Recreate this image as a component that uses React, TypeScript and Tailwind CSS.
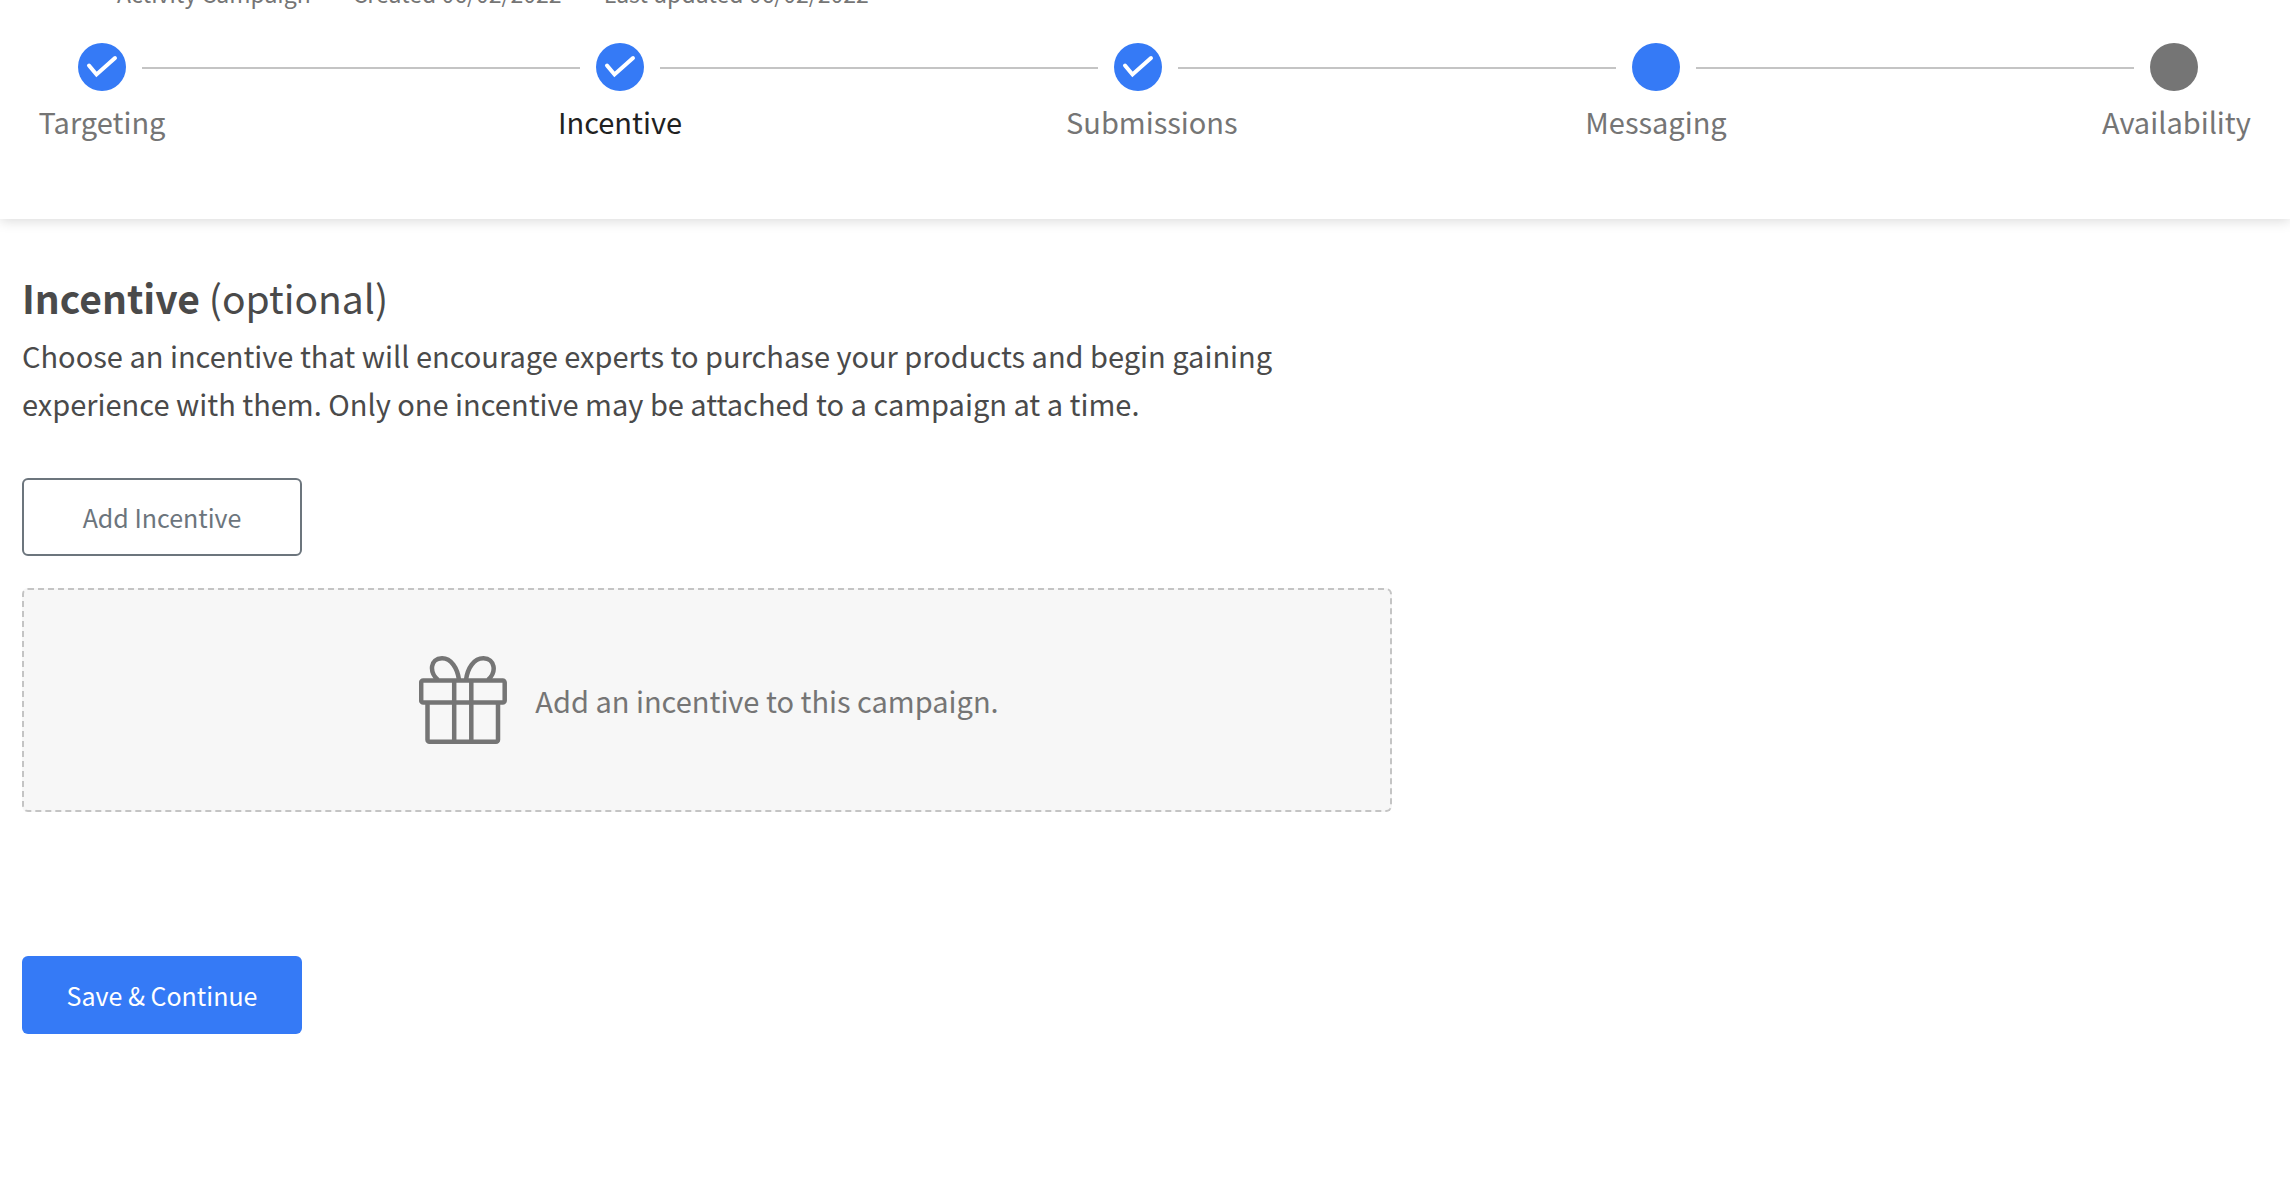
type StepState = "done" | "started" | "pending";

interface Step {
  label: string;
  state: StepState;
  current?: boolean;
}

const steps: Step[] = [
  { label: "Targeting", state: "done" },
  { label: "Incentive", state: "done", current: true },
  { label: "Submissions", state: "done" },
  { label: "Messaging", state: "started" },
  { label: "Availability", state: "pending" },
];

const meta = ["Activity Campaign", "Created 06/02/2022", "Last updated 06/02/2022"];

function StepDot({ state }: { state: StepState }) {
  return (
    <span
      className={`flex size-12 items-center justify-center rounded-full ${
        state === "pending" ? "bg-[#757575]" : "bg-[#357af6]"
      }`}
    >
      {state === "done" && (
        <svg viewBox="0 0 48 48" className="size-12" fill="none" aria-hidden="true">
          <path
            d="M11 22.5L18.5 31.5L37 15"
            stroke="white"
            strokeWidth="4"
            strokeLinecap="round"
            strokeLinejoin="miter"
          />
        </svg>
      )}
    </span>
  );
}

function GiftIcon() {
  return (
    <svg
      viewBox="0 0 88 88"
      className="size-[88px]"
      fill="none"
      stroke="#757575"
      strokeWidth="4.5"
      strokeLinejoin="round"
      aria-hidden="true"
    >
      <rect x="2.2" y="24.5" width="83.5" height="22" rx="2" />
      <path d="M8.5 46.5V83.7a2 2 0 0 0 2 2H77a2 2 0 0 0 2-2V46.5" />
      <path d="M35.2 24.5V86M52.3 24.5V86" />
      <path d="M19 24C10 16 11 2.5 23 2.3C32 2.2 38.5 12 40 24" />
      <path d="M69 24C78 16 76 2.5 64.5 2.3C55 2.2 48.5 12 47 24" />
    </svg>
  );
}

export default function App() {
  return (
    <div className="min-h-screen bg-white font-['Noto_Sans_CJK_SC',sans-serif] text-[29px] leading-[48px] text-[#4a4a4a]">
      <header className="overflow-hidden bg-white pb-[74px] shadow-[0_2px_12px_rgba(0,0,0,0.15)]">
        {/* campaign details, scrolled almost out of view */}
        <div className="-mt-7 flex h-[43px] gap-[42px] pl-[117px] text-[23px] leading-[42px] text-[#757575]">
          {meta.map((item) => (
            <span key={item}>{item}</span>
          ))}
        </div>

        {/* stepper */}
        <ol className="mt-7 flex pr-11 pl-[30px]">
          {steps.map((step, i) => (
            <li key={step.label} className={i > 0 ? "flex flex-1" : "flex"}>
              {i > 0 && <span className="-mx-8 mt-6 h-0.5 flex-1 bg-[#c4c4c4]" />}
              <div className="w-36">
                <div className="flex justify-center">
                  <StepDot state={step.state} />
                </div>
                <a
                  href="#"
                  className={`mt-1.5 block text-center ${
                    step.current ? "text-[#212121]" : "text-[#757575]"
                  }`}
                >
                  {step.label}
                </a>
              </div>
            </li>
          ))}
        </ol>
      </header>

      <main className="px-[22px] pt-12 pb-10">
        <h1 className="text-[39px] leading-[60px]">
          <span className="font-bold">Incentive</span> (optional)
        </h1>
        <p className="mt-1 max-w-[1280px]">
          Choose an incentive that will encourage experts to purchase your products and begin
          gaining experience with them. Only one incentive may be attached to a campaign at a time.
        </p>

        <button
          type="button"
          className="mt-[51px] block h-[78px] w-[280px] rounded-md border-2 border-[#6c757d] text-[25px] text-[#6c757d]"
        >
          Add Incentive
        </button>

        <div className="mt-8 flex h-56 w-full max-w-[1370px] items-center justify-center gap-7 rounded-md border-2 border-dashed border-[#c4c4c4] bg-[#f7f7f7] pl-1 text-[#757575]">
          <GiftIcon />
          <span>Add an incentive to this campaign.</span>
        </div>

        <button
          type="button"
          className="mt-36 block h-[78px] w-[280px] rounded-md bg-[#357af6] text-[25px] text-white"
        >
          Save &amp; Continue
        </button>
      </main>
    </div>
  );
}
